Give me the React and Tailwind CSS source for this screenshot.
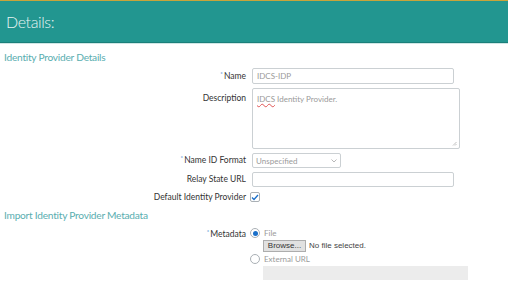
import React from 'react';

const Label = ({ children, required }) => (
  <div className="w-[246px] shrink-0 text-right text-[8.5px] text-[#333]">
    {required && <sup className="text-[6px] text-[#1a6fc9] mr-[1px]">*</sup>}
    {children}
  </div>
);

const App = () => {
  return (
    <div className="w-[508px] h-[286px] bg-white overflow-hidden" style={{ fontFamily: 'Lato, "Open Sans", sans-serif' }}>
      <div className="h-[1px] bg-[#c9a43a]" />
      <div className="h-[42px] bg-[#229690] border-b border-[#1b7f7a] flex items-center pl-[6px]">
        <span className="text-[16px] font-light text-[#e8f4f3] tracking-tight">Details:</span>
      </div>
      <div className="h-[1px] bg-[#cfe7e5]" />

      <div className="pl-[4px] pt-[6px] text-[10.2px] text-[#5aaeb0] tracking-tight leading-[14px]">Identity Provider Details</div>

      <div className="flex flex-col mt-[4px]">
        <div className="flex items-center gap-[6px] h-[16px]">
          <Label required>Name</Label>
          <div className="w-[202px] h-[16px] border border-[#cbd0d3] rounded-[2px] px-[4px] text-[8px] text-[#9a9a9a] flex items-center">IDCS-IDP</div>
        </div>
        <div className="flex items-start gap-[6px] mt-[4px]">
          <div className="pt-[4px]"><Label>Description</Label></div>
          <div className="relative w-[208px] h-[61px] border border-[#cbd0d3] rounded-[2px] px-[4px] pt-[4px] text-[8px] text-[#9a9a9a]">
            <span className="underline decoration-wavy decoration-[#e05555] decoration-[0.5px] underline-offset-[1px]">IDCS</span> Identity Provider.
            <svg className="absolute right-[2px] bottom-[2px]" width="5" height="5" viewBox="0 0 5 5">
              <path d="M4.5 1 L1 4.5 M4.5 3 L3 4.5" stroke="#999" strokeWidth="0.6" />
            </svg>
          </div>
        </div>
        <div className="flex items-center gap-[6px] h-[15px] mt-[4px]">
          <Label required>Name ID Format</Label>
          <div className="w-[89px] h-[15px] border border-[#cbd0d3] rounded-[2px] px-[3px] text-[8px] text-[#9a9a9a] flex items-center justify-between">
            <span>Unspecified</span>
            <svg width="6" height="4" viewBox="0 0 6 4"><path d="M0.5 0.5 L3 3 L5.5 0.5" stroke="#999" strokeWidth="0.7" fill="none" /></svg>
          </div>
        </div>
        <div className="flex items-center gap-[6px] h-[15px] mt-[4px]">
          <Label>Relay State URL</Label>
          <div className="w-[202px] h-[15px] border border-[#cbd0d3] rounded-[2px]" />
        </div>
        <div className="flex items-center gap-[4px] h-[12px] mt-[4px]">
          <Label>Default Identity Provider</Label>
          <div className="w-[10px] h-[10px] border border-[#aab0b5] rounded-[2px] bg-white flex items-center justify-center">
            <svg width="8" height="7" viewBox="0 0 8 7"><path d="M1 3.5 L3 5.5 L7 1" stroke="#1a6fc9" strokeWidth="1.3" fill="none" /></svg>
          </div>
        </div>
      </div>

      <div className="pl-[4px] mt-[5px] text-[10.2px] text-[#5aaeb0] tracking-tight leading-[14px]">Import Identity Provider Metadata</div>

      <div className="flex items-start gap-[4px] mt-[5px]">
        <div className="pt-[1px]"><Label required>Metadata</Label></div>
        <div className="flex flex-col">
          <div className="flex items-center gap-[4px] h-[12px]">
            <div className="w-[10px] h-[10px] rounded-full border border-[#aab0b5] flex items-center justify-center">
              <div className="w-[5px] h-[5px] rounded-full bg-[#1a6fc9]" />
            </div>
            <span className="text-[8px] text-[#9a9a9a]">File</span>
          </div>
          <div className="flex items-center gap-[3px] ml-[13px] mt-[1px]">
            <div className="h-[12px] w-[43px] bg-[#e1e1e1] border border-[#adadad] text-[8px] text-[#333] flex items-center justify-center" style={{ fontFamily: '"Liberation Sans", sans-serif' }}>Browse...</div>
            <span className="text-[8px] text-[#444]" style={{ fontFamily: '"Liberation Sans", sans-serif' }}>No file selected.</span>
          </div>
          <div className="flex items-center gap-[4px] h-[12px] mt-[1px]">
            <div className="w-[10px] h-[10px] rounded-full border border-[#aab0b5]" />
            <span className="text-[8px] text-[#9a9a9a]">External URL</span>
          </div>
          <div className="ml-[13px] w-[205px] h-[14px] bg-[#ececec] mt-[1px]" />
        </div>
      </div>
    </div>
  );
};

export default App;
